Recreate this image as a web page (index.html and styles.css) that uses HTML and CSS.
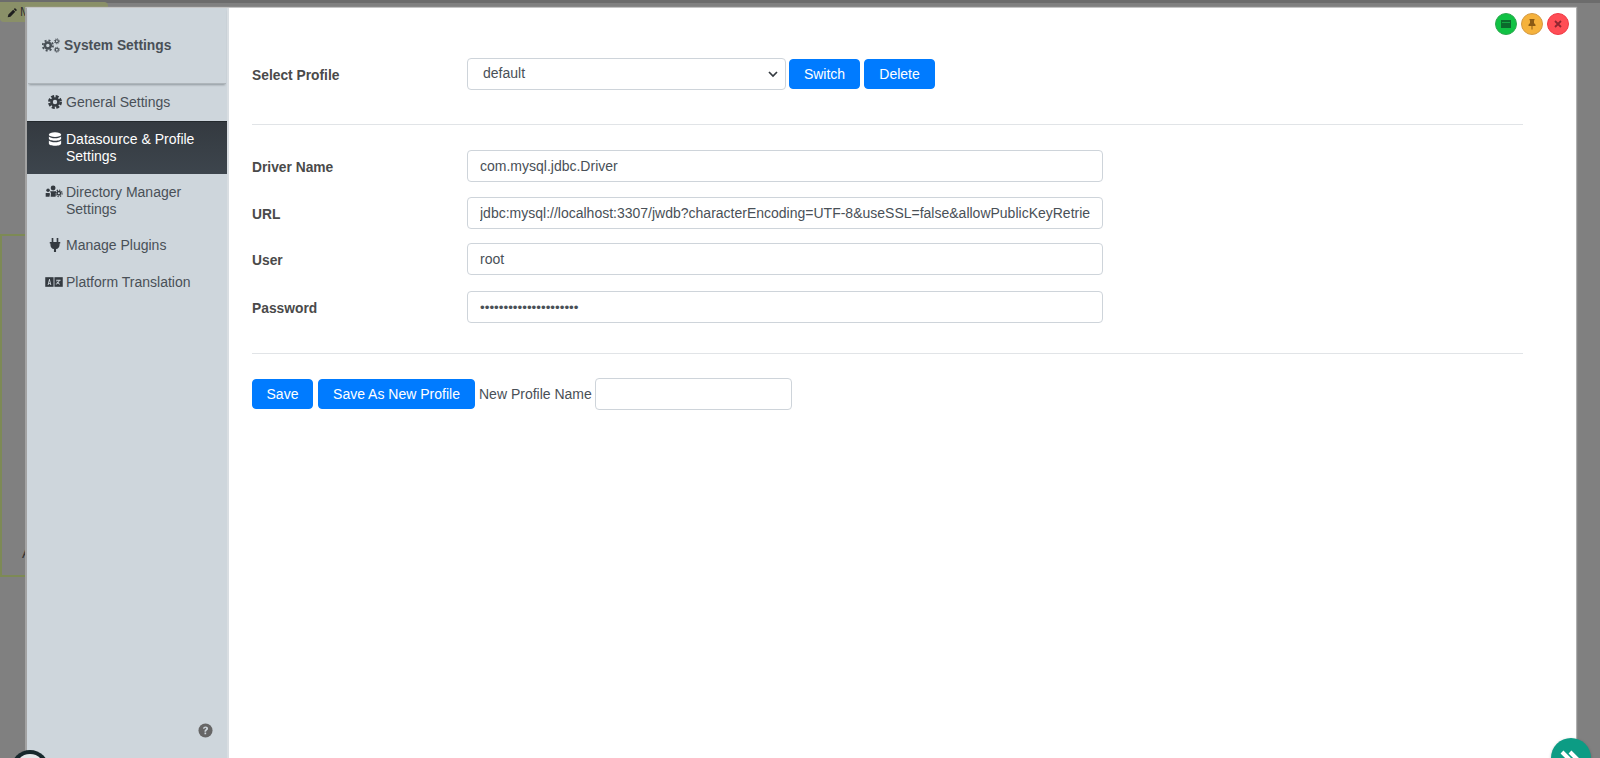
FILE: index.html
```html
<!DOCTYPE html>
<html lang="en">
<head>
<meta charset="utf-8">
<title>System Settings</title>
<link rel="stylesheet" href="styles.css">
</head>
<body>
<div class="backdrop">
  <div class="bg-topbar"></div>
  <div class="bg-manage"><svg class="bg-pencil" viewBox="0 0 16 16"><path d="M11.5 1.500l3 3-1.600 1.600-3-3zM9 3.900l3 3L5 14l-4 1 1-4z"/></svg><span>M</span></div>
  <div class="bg-box"><span class="bg-letter">A</span></div>
</div>
<div class="modal">
  <aside class="sidebar">
    <div class="side-title">
      <svg class="title-icon" viewBox="0 0 20 16"><g fill="none" stroke="#495057"><circle cx="6.500" cy="8" r="3.300" stroke-width="2.800"/><circle cx="6.500" cy="8" r="5.700" stroke-width="2" stroke-dasharray="2.240 2.240"/><circle cx="16.500" cy="3.300" r="1.700" stroke-width="1.300"/><circle cx="16.500" cy="3.300" r="2.800" stroke-width="1" stroke-dasharray="1.100 1.100"/><circle cx="16.500" cy="12.700" r="1.700" stroke-width="1.300"/><circle cx="16.500" cy="12.700" r="2.800" stroke-width="1" stroke-dasharray="1.100 1.100"/></g></svg>
      <span>System Settings</span>
    </div>
    <nav class="side-nav">
      <a class="side-item">
        <svg class="side-icon" viewBox="0 0 16 16"><g fill="none" stroke="#343a40"><circle cx="8" cy="8" r="4" stroke-width="3"/><circle cx="8" cy="8" r="6.500" stroke-width="3" stroke-dasharray="3.400 1.700"/></g></svg>
        <span>General Settings</span>
      </a>
      <a class="side-item active">
        <svg class="side-icon" viewBox="0 0 16 16"><g fill="#fff"><ellipse cx="8" cy="3" rx="7" ry="2.800"/><path d="M1 5v2.400C1 8.900 4.100 10 8 10s7-1.100 7-2.600V5c-1.100 1.300-3.800 2-7 2S2.100 6.300 1 5z"/><path d="M1 9.600v3.400C1 14.500 4.100 15.600 8 15.600s7-1.100 7-2.600V9.600c-1.100 1.300-3.800 2-7 2s-5.900-.7-7-2z"/></g></svg>
        <span>Datasource &amp; Profile Settings</span>
      </a>
      <a class="side-item">
        <svg class="side-icon wide" viewBox="0 0 20 16"><g fill="#343a40"><circle cx="3.200" cy="6" r="2"/><circle cx="9" cy="3.500" r="2.800"/><path d="M.5 9h4.300l.6 1-.6 3.500H.5zM5.500 7.200h6.500l1 1.500-1.200 1v3.800H6.200l.3-4z"/></g><g fill="none" stroke="#343a40"><circle cx="15.500" cy="9.500" r="2" stroke-width="1.600"/><circle cx="15.500" cy="9.500" r="3.700" stroke-width="1.500" stroke-dasharray="1.450 1.450"/></g></svg>
        <span>Directory Manager Settings</span>
      </a>
      <a class="side-item">
        <svg class="side-icon" viewBox="0 0 16 16"><path fill="#343a40" d="M4.200 0h1.900v4.500h3.800V0h1.900v4.500H14v1.900h-.8V8c0 2.500-1.700 4.300-4 4.700V16H6.800v-3.300c-2.300-.4-4-2.200-4-4.700V6.400H2V4.500h2.200z"/></svg>
        <span>Manage Plugins</span>
      </a>
      <a class="side-item">
        <svg class="side-icon wide" viewBox="0 0 20 16"><rect x="0" y="2.500" width="9.500" height="11" fill="#343a40"/><rect x="10.500" y="2.500" width="9.500" height="11" fill="#343a40"/><path d="M2.700 11.500l1.700-7h.8l1.700 7H5.800l-.3-1.500H4.100l-.3 1.500zM4.300 9h1l-.5-2.500z" fill="#ced6dc"/><path d="M12.500 5.500h5v1.100h-1.100c-.3 1.100-.8 1.900-1.400 2.500.5.400 1.100.7 1.800.9l-.4 1c-.8-.3-1.500-.7-2.100-1.200-.5.500-1.200.9-2 1.200l-.4-1c.7-.2 1.300-.6 1.700-1-.4-.5-.7-1-.9-1.600h1c.2.400.4.700.6 1 .4-.5.700-1 .9-1.800h-2.700z" fill="#ced6dc"/></svg>
        <span>Platform Translation</span>
      </a>
    </nav>
    <svg class="help" viewBox="0 0 16 16"><circle cx="8" cy="8" r="7.500" fill="#666"/><path d="M5.400 6.100C5.500 4.500 6.600 3.700 8.100 3.700c1.500 0 2.600.9 2.600 2.200 0 1-.6 1.600-1.300 2-.5.300-.7.500-.7 1v.4H6.900V8.700c0-.9.400-1.400 1-1.800.5-.3.900-.5.900-1 0-.5-.4-.8-.9-.8-.6 0-1 .3-1 1zM6.900 10.200h1.800v1.900H6.900z" fill="#ced6dc"/></svg>
  </aside>
  <main class="content">
    <div class="window-actions">
      <span class="win-btn win-green"><svg viewBox="0 0 12 12"><path fill="#0b6b2c" d="M1 2h10v8H1z"/><path fill="#19c14d" d="M2 4.200h8v.7H2z"/></svg></span>
      <span class="win-btn win-orange"><svg viewBox="0 0 12 12"><path fill="#8a5a14" d="M3.500 1h5v1L8 2.500V5l1.500 1.800V8h-3v3.500h-1V8h-3V6.800L4 5V2.500L3.500 2z"/></svg></span>
      <span class="win-btn win-red"><svg viewBox="0 0 12 12"><path stroke="#8f2630" stroke-width="1.800" d="M3 3l6 6M9 3l-6 6"/></svg></span>
    </div>
    <section class="section section-profile">
      <label class="form-label">Select Profile</label>
      <div class="inline">
        <div class="select"><span>default</span><svg class="chevron" viewBox="0 0 12 12"><path d="M2 4l4 4 4-4" fill="none" stroke="#343a40" stroke-width="1.700"/></svg></div>
        <button class="btn">Switch</button>
        <button class="btn">Delete</button>
      </div>
    </section>
    <hr class="divider">
    <section class="section section-fields">
      <div class="row"><label class="form-label">Driver Name</label><input class="input" value="com.mysql.jdbc.Driver"></div>
      <div class="row"><label class="form-label">URL</label><input class="input" value="jdbc:mysql://localhost:3307/jwdb?characterEncoding=UTF-8&amp;useSSL=false&amp;allowPublicKeyRetrieval=true"></div>
      <div class="row"><label class="form-label">User</label><input class="input" value="root"></div>
      <div class="row"><label class="form-label">Password</label><input class="input input-password" type="password" value="passwordpasswordpassw"></div>
    </section>
    <hr class="divider">
    <section class="actions">
      <button class="btn btn-save">Save</button>
      <button class="btn">Save As New Profile</button>
      <span class="new-label">New Profile Name</span>
      <input class="input input-small">
    </section>
  </main>
</div>
<div class="ring"><div class="ring-inner"></div></div>
<div class="fab"><svg viewBox="0 0 40 40"><path d="M11 14l8 8M19 14l8 8" stroke="#fff" stroke-width="4" fill="none"/></svg></div>
</body>
</html>
```
FILE: styles.css
```css
* { box-sizing: border-box; }
html, body { margin: 0; height: 100%; overflow: hidden; }
body { background: #808080; font-family: "Liberation Sans", Arial, sans-serif; color: #495057; }

.backdrop { position: absolute; inset: 0; }
.bg-topbar { position: absolute; left: 0; right: 0; top: 0; height: 3px; background: #6c6c6c; }
.bg-manage { position: absolute; left: 0; top: 2px; width: 108px; height: 20px; background: #8a9068; border-radius: 0 4px 4px 4px; font-size: 12px; color: #333; display: flex; align-items: center; padding-left: 7px; gap: 2px; }
.bg-pencil { width: 11px; height: 11px; fill: #1f1f1f; }
.bg-box { position: absolute; left: 0; top: 234px; width: 40px; height: 343px; border: 2px solid #7d8a55; }
.bg-letter { position: absolute; left: 20px; top: 309px; font-size: 14px; color: #333; }

.modal { position: absolute; left: 25px; right: 24px; top: 7px; bottom: 0; display: flex; background: #fff; border-left: 2px solid #a3a3a3; border-top: 1px solid #c4c4c4; box-shadow: 1px 0 1px #b0b0b0; }

.sidebar { position: relative; flex: none; width: 202px; background: #ced6dc; border-right: 2px solid #d9dee2; }
.side-title { height: 76px; display: flex; align-items: center; gap: 4px; padding-left: 14px; margin: 0 1px; box-shadow: 0 2px 2px -1px #8f979d; border-bottom: 1px solid #aeb5ba; font-size: 13.8px; font-weight: 700; color: #495057; }
.title-icon { flex: none; width: 18px; height: 15px; }
.side-nav { display: flex; flex-direction: column; }
.side-item { display: flex; align-items: flex-start; padding: 10px 10px 10px 21px; gap: 4px; font-size: 14px; line-height: 16.5px; color: #495057; min-height: 37px; }
.side-item.active { background: linear-gradient(#343a40, #3d454d); color: #fff; border-top: 1px solid #23292d; min-height: 53px; padding-top: 9px; }
.side-icon { flex: none; width: 14px; height: 14px; margin-top: 1px; }
.side-icon.wide { width: 18px; margin-left: -3px; margin-right: -1px; }
.help { position: absolute; right: 14px; bottom: 20px; width: 15px; height: 15px; }

.content { position: relative; flex: 1; min-width: 0; padding: 50px 24px 0 23px; }
.window-actions { position: absolute; top: 5px; right: 7px; display: flex; gap: 4px; }
.win-btn { width: 22px; height: 22px; border-radius: 50%; display: flex; align-items: center; justify-content: center; }
.win-btn svg { width: 12px; height: 12px; }
.win-green { background: #10c244; border: 1px solid #2ea84f; }
.win-orange { background: #f5b23c; border: 1px solid #d49a45; }
.win-red { background: #ff4d55; border: 1px solid #f03a45; }

.section-profile { display: flex; align-items: center; height: 32px; }
.form-label { flex: none; width: 215px; font-size: 13.8px; font-weight: 700; color: #4a4a4a; padding-top: 3px; }
.inline { display: flex; align-items: center; gap: 4px; }
.select { width: 319px; height: 32px; margin-right: -1px; border: 1px solid #ced4da; border-radius: 4px; background: #fff; display: flex; align-items: center; justify-content: space-between; padding: 0 6px 0 15px; font-size: 14px; color: #495057; }
.select span { margin-top: -2px; }
.chevron { width: 12px; height: 12px; }
.btn { height: 30px; border: 1px solid #007bff; border-radius: 4px; background: #007bff; color: #fff; font: 400 14px "Liberation Sans", Arial, sans-serif; padding: 0 14px; }
.section-profile .btn { width: 71px; padding: 0; }

.divider { border: 0; border-top: 1px solid #e1e4e7; margin: 34px 0 0; width: 1271px; }
.section-fields { display: flex; flex-direction: column; padding-top: 25px; }
.row { display: flex; align-items: center; height: 32px; margin-bottom: 15px; }
.row:nth-child(2) { margin-bottom: 14px; }
.row:nth-child(3) { margin-bottom: 16px; }
.input { width: 636px; height: 32px; border: 1px solid #ced4da; border-radius: 4px; padding: 0 12px; font: 400 14px "Liberation Sans", Arial, sans-serif; color: #495057; background: #fff; outline: 0; }
.input-password { font-size: 13.4px; }
.section-fields + .divider { margin-top: 15px; }
.actions { display: flex; align-items: center; padding-top: 24px; }
.btn-save { width: 61px; padding: 0; margin-right: 5px; }
.actions .btn:nth-child(2) { width: 157px; padding: 0; }
.new-label { font-size: 14px; color: #495057; margin: 0 3px 0 4px; }
.input-small { width: 197px; }

.ring { position: fixed; left: 11px; top: 750px; width: 38px; height: 38px; border-radius: 50%; background: #16282c; padding: 4px; }
.ring-inner { width: 30px; height: 30px; border-radius: 50%; background: #e4e8ea; }
.fab { position: fixed; left: 1551px; top: 738px; width: 40px; height: 40px; border-radius: 50%; background: #0c9c84; box-shadow: 0 1px 3px rgba(0,0,0,.25); }
.fab svg { width: 40px; height: 40px; display: block; }
```
